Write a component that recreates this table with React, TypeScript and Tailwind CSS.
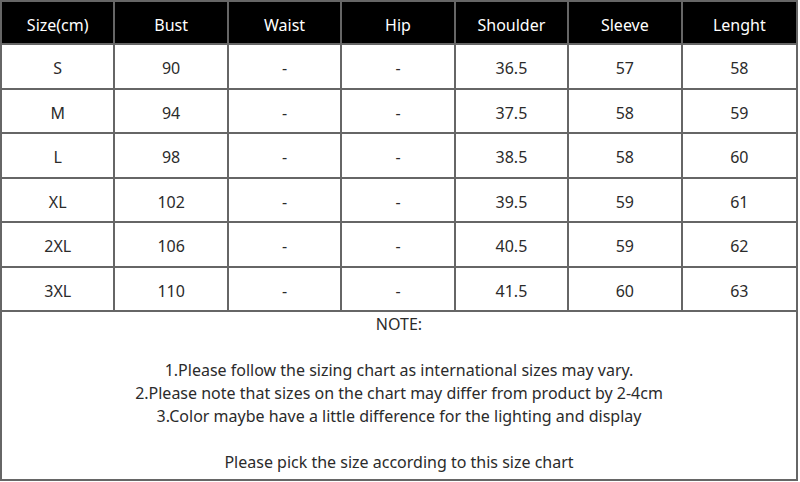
const headers = ['Size(cm)', 'Bust', 'Waist', 'Hip', 'Shoulder', 'Sleeve', 'Lenght'];

const rows = [
  ['S', '90', '-', '-', '36.5', '57', '58'],
  ['M', '94', '-', '-', '37.5', '58', '59'],
  ['L', '98', '-', '-', '38.5', '58', '60'],
  ['XL', '102', '-', '-', '39.5', '59', '61'],
  ['2XL', '106', '-', '-', '40.5', '59', '62'],
  ['3XL', '110', '-', '-', '41.5', '60', '63'],
];

export default function App() {
  return (
    <div className="w-[800px] h-[482px] bg-white">
      <div
        className="w-[798px] h-[481px] text-[#2b2b2b] text-[16px] border-2 border-[#666] flex flex-col"
        style={{ fontFamily: '"Noto Sans", "Open Sans", sans-serif' }}
      >
        <div className="grid grid-cols-7">
          {headers.map((h, i) => (
            <div
              key={h}
              className={[
                'h-[43px] pt-1 bg-black text-white flex items-center justify-center border-b-2 border-[#666]',
                i < 6 ? 'border-r-2' : '',
              ].join(' ')}
            >
              {h}
            </div>
          ))}
          {rows.map((row, r) =>
            row.map((cell, i) => (
              <div
                key={`${r}-${i}`}
                className={[
                  'h-[44.5px] pt-1 flex items-center justify-center border-b-2 border-[#666]',
                  i < 6 ? 'border-r-2' : '',
                ].join(' ')}
              >
                {cell}
              </div>
            ))
          )}
        </div>
        <div className="flex-1 text-center leading-[23px] pt-px">
          <p>NOTE:</p>
          <p>&nbsp;</p>
          <p>1.Please follow the sizing chart as international sizes may vary.</p>
          <p>2.Please note that sizes on the chart may differ from product by 2-4cm</p>
          <p>3.Color maybe have a little difference for the lighting and display</p>
          <p>&nbsp;</p>
          <p>Please pick the size according to this size chart</p>
        </div>
      </div>
    </div>
  );
}
